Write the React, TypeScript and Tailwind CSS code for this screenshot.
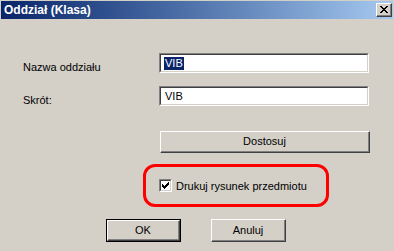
import React from "react";

const Sunken = ({ value, selected }: { value: string; selected?: boolean }) => (
  <div className="w-[210px] h-[20px] border-t border-l border-t-[#808080] border-l-[#808080] border-b border-r border-b-white border-r-white">
    <div className="h-full border-t border-l border-t-[#404040] border-l-[#404040] border-b border-r border-b-[#d4d0c8] border-r-[#d4d0c8] bg-white flex items-center pl-[3px]">
      <span
        className={
          selected
            ? "bg-[#0a246a] text-white leading-[13px] px-[1px]"
            : "text-black leading-[13px] px-[1px]"
        }
      >
        {value}
      </span>
    </div>
  </div>
);

const Raised = ({
  label,
  w,
  h,
  isDefault,
}: {
  label: string;
  w: string;
  h: string;
  isDefault?: boolean;
}) => (
  <div className={`${w} ${h} ${isDefault ? "border border-black" : ""}`}>
    <div className="h-full border-t border-l border-t-white border-l-white border-b border-r border-b-[#404040] border-r-[#404040]">
      <div className="h-full border-b border-r border-b-[#808080] border-r-[#808080] flex items-center justify-center text-black">
        {label}
      </div>
    </div>
  </div>
);

const App = () => {
  return (
    <div
      className="w-[394px] h-[251px] bg-[#d4d0c8] text-[11px] text-black overflow-hidden"
      style={{ fontFamily: '"Liberation Sans", Arial, sans-serif' }}
    >
      {/* title bar */}
      <div className="mt-[1px] mx-[1px] h-[18px] flex items-center justify-between pl-[3px] pr-[1px] bg-gradient-to-r from-[#0a246a] to-[#a6caf0]">
        <span className="text-white font-bold text-[12px] leading-[14px]">Oddział (Klasa)</span>
        <div className="w-[16px] h-[14px] border-t border-l border-t-white border-l-white border-b border-r border-b-[#404040] border-r-[#404040] bg-[#d4d0c8]">
          <div className="h-full border-b border-r border-b-[#808080] border-r-[#808080] flex items-center justify-center">
            <svg width="8" height="7" viewBox="0 0 8 7" shapeRendering="crispEdges">
              <path
                d="M0 0h2v1H0zM6 0h2v1H6zM1 1h2v1H1zM5 1h2v1H5zM2 2h4v1H2zM3 3h2v1H3zM2 4h4v1H2zM1 5h2v1H1zM5 5h2v1H5zM0 6h2v1H0zM6 6h2v1H6z"
                fill="#000"
              />
            </svg>
          </div>
        </div>
      </div>

      <div className="flex flex-col">
        <div className="flex pl-[23px] mt-[34px]">
          <div className="w-[136px] pt-[8px] leading-[13px]">Nazwa oddziału</div>
          <Sunken value="VIB" selected />
        </div>
        <div className="flex pl-[23px] mt-[12px]">
          <div className="w-[136px] pt-[8px] leading-[13px]">Skrót:</div>
          <Sunken value="VIB" />
        </div>

        <div className="ml-[160px] mt-[24px]">
          <Raised label="Dostosuj" w="w-[210px]" h="h-[22px]" />
        </div>

        <div className="ml-[143px] mt-[11px] w-[186px] h-[43px] border-[3px] border-[#ff0000] rounded-[12px] flex items-center pl-[13px] gap-[4px]">
          <div className="w-[13px] h-[13px] border-t border-l border-t-[#808080] border-l-[#808080] border-b border-r border-b-white border-r-white">
            <div className="h-full border-t border-l border-t-[#404040] border-l-[#404040] border-b border-r border-b-[#d4d0c8] border-r-[#d4d0c8] bg-white flex items-center justify-center">
              <svg width="7" height="7" viewBox="0 0 7 7" shapeRendering="crispEdges">
                <path
                  d="M6 0h1v3H6zM5 1h1v3H5zM4 2h1v3H4zM3 3h1v3H3zM2 4h1v3H2zM1 3h1v3H1zM0 2h1v3H0z"
                  fill="#000"
                />
              </svg>
            </div>
          </div>
          <span className="leading-[13px] mt-[1px]">Drukuj rysunek przedmiotu</span>
        </div>

        <div className="ml-[106px] mt-[12px] flex gap-[30px]">
          <Raised label="OK" w="w-[75px]" h="h-[23px]" isDefault />
          <Raised label="Anuluj" w="w-[75px]" h="h-[23px]" />
        </div>
      </div>
    </div>
  );
};

export default App;
